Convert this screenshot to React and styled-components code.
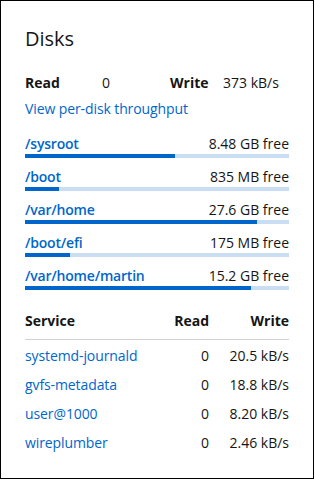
import React from "react";
import styled, { createGlobalStyle } from "styled-components";

const Global = createGlobalStyle`
  html, body { margin: 0; padding: 0; background: #fff; }
  body { font-family: "Open Sans", "Liberation Sans", sans-serif; color: #151515; }
  * { box-sizing: border-box; }
`;

const Card = styled.section`
  width: 314px;
  height: 479px;
  border: 1px solid #000;
  padding: 25px 24px 0 24px;
  font-size: 14px;
  line-height: 21px;
`;

const Title = styled.h2`
  margin: 0;
  font-size: 20px;
  line-height: 26px;
  font-weight: 400;
`;

const Stats = styled.div`
  display: grid;
  grid-template-columns: 77px 68px 53px auto;
  margin-top: 20px;
`;

const Label = styled.span`
  font-weight: 700;
`;

const Link = styled.a`
  color: #0066cc;
  text-decoration: none;
  font-weight: ${(p) => (p.$strong ? 600 : 400)};
  letter-spacing: ${(p) => (p.$strong ? "-0.2px" : "-0.1px")};
`;

const LinkLine = styled.div`
  margin-top: 5px;
`;

const DiskList = styled.div`
  display: flex;
  flex-direction: column;
  gap: 8px;
  margin-top: 14px;
`;

const DiskRow = styled.div`
  display: flex;
  flex-direction: column;
`;

const DiskHead = styled.div`
  display: flex;
  justify-content: space-between;
`;

const Track = styled.div`
  height: 4px;
  background: #c9def3;
`;

const Fill = styled.div`
  height: 100%;
  background: #0066cc;
`;

const Table = styled.table`
  width: 100%;
  border-collapse: collapse;
  margin-top: 20px;
`;

const Th = styled.th`
  font-weight: 700;
  text-align: ${(p) => (p.$right ? "right" : "left")};
  padding: 0 0 8px 0;
  border-bottom: 1px solid #d2d2d2;
  width: ${(p) => p.$w || "auto"};
`;

const Td = styled.td`
  text-align: ${(p) => (p.$right ? "right" : "left")};
  padding: 5px 0 3px 0;
`;

const disks = [
  { name: "/sysroot", free: "8.48 GB free", used: 0.57 },
  { name: "/boot", free: "835 MB free", used: 0.128 },
  { name: "/var/home", free: "27.6 GB free", used: 0.879 },
  { name: "/boot/efi", free: "175 MB free", used: 0.17 },
  { name: "/var/home/martin", free: "15.2 GB free", used: 0.857 },
];

const services = [
  { name: "systemd-journald", read: "0", write: "20.5 kB/s" },
  { name: "gvfs-metadata", read: "0", write: "18.8 kB/s" },
  { name: "user@1000", read: "0", write: "8.20 kB/s" },
  { name: "wireplumber", read: "0", write: "2.46 kB/s" },
];

export default function App() {
  return (
    <>
      <Global />
      <Card>
        <Title>Disks</Title>
        <Stats>
          <Label>Read</Label>
          <span>0</span>
          <Label>Write</Label>
          <span>373 kB/s</span>
        </Stats>
        <LinkLine>
          <Link href="#">View per-disk throughput</Link>
        </LinkLine>
        <DiskList>
          {disks.map((d) => (
            <DiskRow key={d.name}>
              <DiskHead>
                <Link href="#" $strong>{d.name}</Link>
                <span>{d.free}</span>
              </DiskHead>
              <Track>
                <Fill style={{ width: `${d.used * 100}%` }} />
              </Track>
            </DiskRow>
          ))}
        </DiskList>
        <Table>
          <thead>
            <tr>
              <Th>Service</Th>
              <Th $right $w="60px">Read</Th>
              <Th $right $w="80px">Write</Th>
            </tr>
          </thead>
          <tbody>
            {services.map((s) => (
              <tr key={s.name}>
                <Td><Link href="#">{s.name}</Link></Td>
                <Td $right>{s.read}</Td>
                <Td $right>{s.write}</Td>
              </tr>
            ))}
          </tbody>
        </Table>
      </Card>
    </>
  );
}
